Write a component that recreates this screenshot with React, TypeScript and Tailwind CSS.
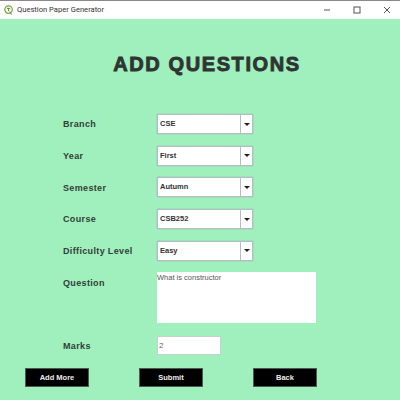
const FIELDS = [
  { label: "Branch", value: "CSE" },
  { label: "Year", value: "First" },
  { label: "Semester", value: "Autumn" },
  { label: "Course", value: "CSB252" },
  { label: "Difficulty Level", value: "Easy" },
];

const fontCls = "font-['Liberation_Sans',Arial,sans-serif]";

function Label({ text }: { text: string }) {
  return <span className="w-[94px] shrink-0 text-[9px] font-bold tracking-[0.35px] text-[#333d38] whitespace-nowrap">{text}</span>;
}

function Select({ value }: { value: string }) {
  return (
    <div className="flex h-[20px] w-[96px] border border-[#b4bec8] bg-white shadow-[0_0_1px_#8a9aa8]">
      <span className="flex-1 pl-[2px] text-[7.5px] font-bold leading-[17px] text-[#333]">{value}</span>
      <span className="flex w-[12px] items-center justify-center border-l border-[#b4bec8]">
        <span className="h-0 w-0 border-x-[3.5px] border-t-[3.5px] border-x-transparent border-t-[#222]" />
      </span>
    </div>
  );
}

function Btn({ text }: { text: string }) {
  return (
    <button className="h-[19px] w-[64px] border border-[#4a5a52] bg-black text-[7.5px] font-bold text-[#eee]">{text}</button>
  );
}

export default function App() {
  return (
    <div className={`flex h-[400px] w-[400px] flex-col overflow-hidden border-t border-[#8a8a8a] bg-[#a0f0bd] ${fontCls}`}>
      <div className="flex h-[18px] shrink-0 items-center bg-white pl-[4px]">
        <svg width="10" height="10" viewBox="0 0 12 12" fill="none">
          <circle cx="5.5" cy="5.5" r="4.5" stroke="#7aa83a" strokeWidth="1.5" />
          <path d="M3.5 4h4M5.5 4v3.5M7 8l2 3.5" stroke="#5a8a3a" strokeWidth="1.2" />
        </svg>
        <span className="ml-[3px] font-['Roboto',sans-serif] text-[7.6px] text-[#333]">Question Paper Generator</span>
        <div className="ml-auto flex items-center gap-[22px] pr-[9px]">
          <svg width="8" height="8" viewBox="0 0 8 8"><path d="M1 4h6" stroke="#555" /></svg>
          <svg width="8" height="8" viewBox="0 0 8 8" fill="none"><rect x="1" y="1" width="6" height="6" stroke="#555" /></svg>
          <svg width="8" height="8" viewBox="0 0 8 8" fill="none"><path d="M1 1l6 6M7 1L1 7" stroke="#555" /></svg>
        </div>
      </div>
      <h1 className="mt-[26px] pl-[14px] text-center text-[20px] font-black leading-[38px] tracking-[1.6px] text-[#2f3533] [-webkit-text-stroke:0.9px_#2f3533]">
        ADD QUESTIONS
      </h1>
      <div className="mt-[31px] flex flex-col gap-[11.7px] pl-[63px]">
        {FIELDS.map(f => (
          <div key={f.label} className="flex items-center">
            <span className="flex pt-[2px]"><Label text={f.label} /></span>
            <Select value={f.value} />
          </div>
        ))}
      </div>
      <div className="mt-[11px] flex items-start pl-[63px]">
        <span className="flex pt-[5px]"><Label text="Question" /></span>
        <div className="h-[51px] w-[159px] bg-white text-[7.5px] leading-[12px] text-[#555]">What is constructor</div>
      </div>
      <div className="mt-[13px] flex items-center pl-[63px]">
        <span className="flex pt-[2px]"><Label text="Marks" /></span>
        <div className="h-[19px] w-[64px] border border-[#c4d4cc] bg-white pl-[1px] text-[8px] leading-[17px] text-[#666]">2</div>
      </div>
      <div className="mt-[13px] flex gap-[50px] pl-[25px]">
        <Btn text="Add More" />
        <Btn text="Submit" />
        <Btn text="Back" />
      </div>
    </div>
  );
}
